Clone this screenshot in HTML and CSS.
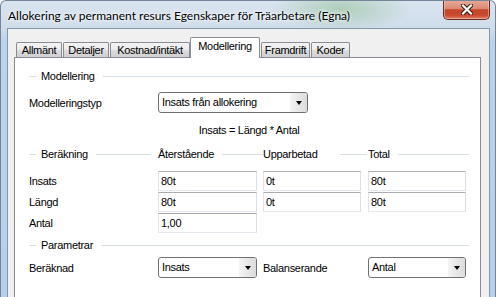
FILE: index.html
```html
<html>
  <head>
    <link rel="stylesheet" href="styles.css">
    <title>Allokering av permanent resurs</title>
  </head>
  <body>
    <div class="window">
      <div class="titlebar">
        <span class="title">Allokering av permanent resurs Egenskaper för Träarbetare (Egna)</span>
        <span class="close">
          <svg width="12" height="11" viewBox="0 0 12 11">
            <path d="M2 1.5 L10 9.5 M10 1.5 L2 9.5" stroke="#3a1a14" stroke-width="4.2" stroke-linecap="square"/>
            <path d="M2 1.5 L10 9.5 M10 1.5 L2 9.5" stroke="#fff" stroke-width="2.2" stroke-linecap="square"/>
          </svg>
        </span>
      </div>
      <div class="client">
        <ul class="tabs">
          <li class="t-allmant">Allmänt</li>
          <li class="t-detaljer">Detaljer</li>
          <li class="t-kostnad">Kostnad/intäkt</li>
          <li class="t-modell active">Modellering</li>
          <li class="t-framdrift">Framdrift</li>
          <li class="t-koder">Koder</li>
        </ul>
        <div class="page">
          <div class="group lead"><span>Modellering</span></div>

          <div class="cols type-row">
            <span class="lbl">Modelleringstyp</span>
            <div class="combo wide"><span class="val">Insats från allokering</span><span class="arrow"></span></div>
          </div>

          <p class="formula">Insats = Längd * Antal</p>

          <div class="cols head">
            <div class="group lead first"><span>Beräkning</span></div>
            <div class="group"><span>Återstående</span></div>
            <div class="group mid"><span class="fixed">Upparbetad</span></div>
            <div class="group"><span>Total</span></div>
          </div>

          <div class="cols fields">
            <span class="lbl">Insats</span>
            <div class="field">80t</div>
            <div class="field">0t</div>
            <div class="field">80t</div>

            <span class="lbl">Längd</span>
            <div class="field">80t</div>
            <div class="field">0t</div>
            <div class="field">80t</div>

            <span class="lbl">Antal</span>
            <div class="field">1,00</div>
          </div>

          <div class="group lead params"><span>Parametrar</span></div>

          <div class="cols param-row">
            <span class="lbl">Beräknad</span>
            <div class="combo"><span class="val">Insats</span><span class="arrow"></span></div>
            <span class="lbl">Balanserande</span>
            <div class="combo"><span class="val">Antal</span><span class="arrow"></span></div>
          </div>
        </div>
      </div>
    </div>
  </body>
</html>
```

FILE: styles.css
```css
body {
  margin: 0;
  background: #fff;
  font-family: "Liberation Sans", Arial, sans-serif;
  font-size: 11px;
  letter-spacing: -0.3px;
  color: #000;
}

.window {
  height: 296px;
  overflow: hidden;
  border: 1px solid #74859a;
  border-bottom: none;
  border-radius: 6px 6px 0 0;
  background:
    radial-gradient(ellipse 70px 22px at 340px 8px, rgba(140, 190, 140, 0.55), rgba(140, 190, 140, 0)),
    linear-gradient(to bottom, #d9e4f0 0px, #cfdcea 28px, #bcd3ec 40px, #b7cfea 100%);
  display: flex;
  flex-direction: column;
}

.titlebar {
  height: 27px;
  display: flex;
  align-items: flex-start;
  padding: 0 5px 0 7px;
}

.title {
  font-family: "Lato", "Noto Sans", sans-serif;
  font-size: 12px;
  letter-spacing: 0;
  line-height: 15px;
  margin-top: 7px;
  text-shadow: 0 0 6px #fff, 0 0 3px #fff;
}

.close {
  margin-left: auto;
  margin-top: -1px;
  width: 47px;
  height: 20px;
  box-sizing: border-box;
  border: 1px solid #6b2a20;
  border-top: none;
  border-radius: 0 0 5px 5px;
  background: linear-gradient(to bottom, #e8ab9b 0%, #d98a74 45%, #c5452a 52%, #c94a2f 80%, #e0806a 100%);
  box-shadow: inset 0 0 0 1px rgba(255, 220, 210, 0.45);
  display: flex;
  align-items: center;
  justify-content: center;
}

.client {
  flex: 1;
  margin: 0 5px 0 6px;
  border: 1px solid #8596a8;
  border-bottom: none;
  background: #f0f0f0;
  display: flex;
  flex-direction: column;
}

.tabs {
  list-style: none;
  margin: 0;
  padding: 8px 0 0 8px;
  display: flex;
  align-items: flex-end;
}

.tabs li {
  height: 15px;
  box-sizing: border-box;
  line-height: 14px;
  text-align: center;
  margin-right: 1px;
  border: 1px solid #898c95;
  border-bottom: none;
  border-radius: 2px 2px 0 0;
  background: linear-gradient(to bottom, #f3f3f3 0%, #ebebeb 50%, #dddddd 51%, #cfcfcf 100%);
}

.tabs .t-allmant { width: 46px; }
.tabs .t-detaljer { width: 46px; }
.tabs .t-kostnad { width: 80px; }
.tabs .t-modell { width: 70px; }
.tabs .t-framdrift { width: 49px; }
.tabs .t-koder { width: 39px; }

.tabs li.active {
  height: 21px;
  padding-top: 1px;
  margin: 0 1px -1px -1px;
  background: #fff;
  position: relative;
  z-index: 1;
}

.page {
  flex: 1;
  margin: 0 8px 0 6px;
  border: 1px solid #898c95;
  border-bottom: none;
  background: #fff;
  padding: 12px 11px 0 14px;
}

.group {
  display: flex;
  align-items: center;
  height: 13px;
  line-height: 13px;
}

.group::after {
  content: "";
  flex: 1;
  height: 1px;
  background: #d5dfe5;
  margin-left: 8px;
}

.group.lead::before {
  content: "";
  width: 7px;
  height: 1px;
  background: #d5dfe5;
  margin-right: 5px;
}

.group.first {
  padding-right: 7px;
}

.group.mid {
  padding-right: 1px;
}

.group .fixed {
  width: 69px;
}

.cols {
  display: grid;
  grid-template-columns: 129px 105px 105px 1fr;
  align-items: center;
}

.type-row {
  margin-top: 9px;
}

.formula {
  margin: 9px 0 0;
  line-height: 16px;
  text-align: center;
}

.head {
  margin-top: 10px;
}

.fields {
  margin-top: 10px;
  row-gap: 1px;
}

.params {
  margin-top: 6px;
}

.param-row {
  margin-top: 5px;
}

.field {
  width: 99px;
  height: 20px;
  box-sizing: border-box;
  line-height: 18px;
  padding-left: 2px;
  border: 1px solid #dbdfe6;
  border-top-color: #abadb3;
  border-left-color: #e2e3ea;
  border-bottom-color: #e3e9ef;
  background: #fff;
}

.field + .field,
.field + .field + .field {
  width: 98px;
}

.combo {
  width: 99px;
  height: 21px;
  box-sizing: border-box;
  border: 1px solid #707070;
  border-radius: 3px;
  background: #fff;
  display: flex;
}

.combo.wide {
  width: 150px;
  grid-column: 2 / 4;
}

.param-row .combo:last-child {
  width: 98px;
}

.combo .val {
  flex: 1;
  line-height: 19px;
  padding-left: 3px;
}

.combo .arrow {
  width: 17px;
  background: linear-gradient(to right, #f4f4f4, #dcdcdc);
  border-radius: 0 2px 2px 0;
  display: flex;
  align-items: center;
  justify-content: center;
}

.combo .arrow::after {
  content: "";
  border-left: 3.5px solid transparent;
  border-right: 3.5px solid transparent;
  border-top: 4px solid #000;
  margin-top: 1px;
}
```
